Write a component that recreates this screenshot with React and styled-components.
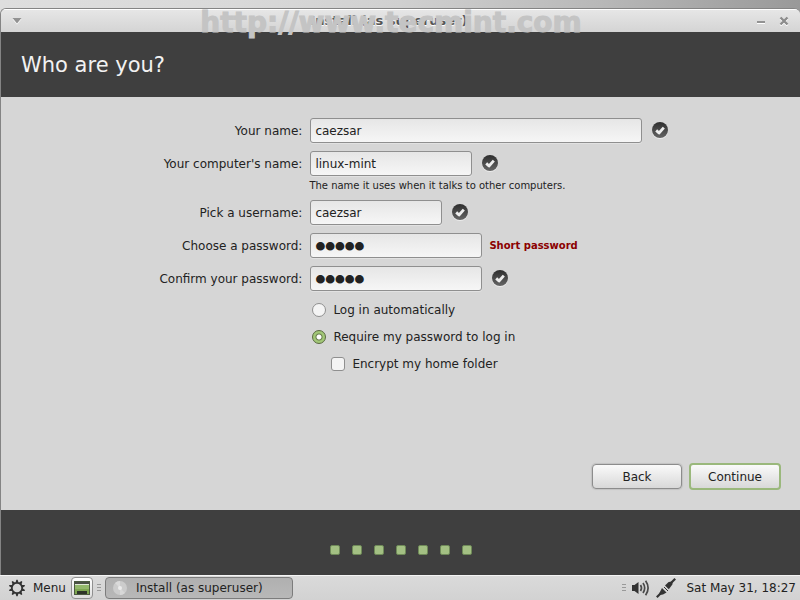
import { useState } from "react";
import styled, { createGlobalStyle } from "styled-components";

const GlobalStyle = createGlobalStyle`
  *,
  *::before,
  *::after {
    box-sizing: border-box;
  }
  body {
    margin: 0;
    font-family: "DejaVu Sans", Verdana, sans-serif;
    font-size: 12px;
    line-height: 16px;
    color: #222222;
    background-color: #d6d6d6;
  }
  button,
  input {
    font: inherit;
    color: inherit;
  }
`;

const steps = [1, 2, 3, 4, 5, 6, 7];

function CheckIcon() {
  return (
    <StyledIcon width="20" height="20" viewBox="0 0 20 20" aria-label="Valid">
      <defs>
        <linearGradient id="badge" x1="0" y1="0" x2="0" y2="1">
          <stop offset="0" stopColor="#2e2e2e" />
          <stop offset="1" stopColor="#666666" />
        </linearGradient>
      </defs>
      <circle cx="11" cy="10" r="8" fill="#ececec" />
      <circle cx="11" cy="9" r="8" fill="url(#badge)" />
      <path
        d="M7.2 9.4 L10 12 L14.8 6.6"
        fill="none"
        stroke="#eeeeee"
        strokeWidth="2.8"
        strokeLinejoin="round"
      />
    </StyledIcon>
  );
}

function GearIcon() {
  const teeth = [0, 36, 72, 108, 144, 180, 216, 252, 288, 324];
  return (
    <StyledIcon width="18" height="18" viewBox="0 0 18 18">
      <circle cx="9" cy="9" r="5.2" fill="none" stroke="#333333" strokeWidth="1.8" />
      {teeth.map((angle) => (
        <path
          key={angle}
          d="M7.4 4 L8.4 0.8 H9.6 L10.6 4 Z"
          fill="#333333"
          transform={`rotate(${angle} 9 9)`}
        />
      ))}
    </StyledIcon>
  );
}

function DesktopIcon() {
  return (
    <svg width="16" height="14" viewBox="0 0 16 14">
      <rect x="0.5" y="0.5" width="15" height="13" fill="#7da650" stroke="#4c5a40" />
      <rect x="1" y="1" width="14" height="2" fill="#4a4f45" />
      <rect x="1" y="3" width="14" height="1" fill="#dfe8d4" />
      <rect x="1" y="4" width="14" height="4" fill="#93b86a" />
      <rect x="3" y="10" width="10" height="3" fill="#2e3429" />
    </svg>
  );
}

function DiscIcon() {
  return (
    <StyledIcon width="16" height="16" viewBox="0 0 16 16">
      <circle cx="8" cy="8" r="7" fill="#cccccc" />
      <path d="M8 8 L3 3 A7 7 0 0 1 8 1 Z" fill="#dadada" />
      <path d="M8 8 L13 13 A7 7 0 0 1 8 15 Z" fill="#d8d8d8" />
      <circle cx="8" cy="8" r="2" fill="#ececec" />
    </StyledIcon>
  );
}

function VolumeIcon() {
  return (
    <StyledIcon width="20" height="18" viewBox="0 0 20 18">
      <path d="M1 6 H3.5 L7.5 3 V15 L3.5 12 H1 Z" fill="#333333" />
      <g fill="none" stroke="#4a4a4a" strokeWidth="1.7">
        <path d="M9.5 6 Q11.5 9 9.5 12" />
        <path d="M12 4 Q15.4 9 12 14" />
        <path d="M14.6 1.8 Q19.6 9 14.6 16.2" />
      </g>
    </StyledIcon>
  );
}

function PlugIcon() {
  return (
    <StyledIcon width="20" height="20" viewBox="0 0 20 20">
      <g stroke="#333333" fill="none">
        <path d="M0.8 19.2 L5 15" strokeWidth="2.2" />
        <path d="M15 5 L19.2 0.8" strokeWidth="2.2" />
        <path d="M8 9 L12 13" strokeWidth="1" />
      </g>
      <path d="M6 10 L10.5 14.5 L7 16.5 L3.6 17 L3.4 15 Z" fill="#333333" />
      <path d="M9 7.6 L12.6 4 L16.6 3.4 L16.4 6.6 L12.8 11.2 Z" fill="#333333" />
    </StyledIcon>
  );
}

function Field({ id, label, hint, error, width, type = "text", value, valid }) {
  return (
    <>
      <StyledLabel htmlFor={id}>{label}</StyledLabel>
      <StyledControl>
        <StyledInput id={id} type={type} defaultValue={value} $width={width} />
        {valid && <CheckIcon />}
        {error && <StyledError>{error}</StyledError>}
      </StyledControl>
      {hint && <StyledHint>{hint}</StyledHint>}
    </>
  );
}

export default function App() {
  const [login, setLogin] = useState("password");

  return (
    <>
      <GlobalStyle />
      <StyledDesktop>
        <StyledWatermark>http://www.tecmint.com</StyledWatermark>
        <StyledWindow>
          <StyledTitleBar>
            <StyledWindowButton aria-label="Window menu">
              <svg width="10" height="8" viewBox="0 0 10 8">
                <path d="M0.5 2 H9.5 L5 7.5 Z" fill="#ffffff" />
                <path d="M0.5 1 H9.5 L5 6.5 Z" fill="#929292" />
              </svg>
            </StyledWindowButton>
            <StyledTitle>Install (as superuser)</StyledTitle>
            <StyledWindowButtons>
              <StyledWindowButton aria-label="Minimize">
                <svg width="10" height="10" viewBox="0 0 10 10">
                  <rect x="1" y="5" width="8" height="2" fill="#929292" />
                  <rect x="1" y="7" width="8" height="1" fill="#ffffff" />
                </svg>
              </StyledWindowButton>
              <StyledWindowButton aria-label="Close">
                <svg width="10" height="10" viewBox="0 0 10 10">
                  <path d="M1.5 2.5 L8.5 9.5 M8.5 2.5 L1.5 9.5" stroke="#ffffff" strokeWidth="2.4" />
                  <path d="M1.5 1.5 L8.5 8.5 M8.5 1.5 L1.5 8.5" stroke="#8c8c8c" strokeWidth="2.4" />
                </svg>
              </StyledWindowButton>
            </StyledWindowButtons>
          </StyledTitleBar>
          <StyledHeader>
            <StyledHeading>Who are you?</StyledHeading>
          </StyledHeader>
          <StyledContent onSubmit={(event) => event.preventDefault()}>
            <StyledForm>
              <Field id="name" label="Your name:" value="caezsar" width={332} valid />
              <Field
                id="computer"
                label="Your computer's name:"
                value="linux-mint"
                width={162}
                hint="The name it uses when it talks to other computers."
                valid
              />
              <Field id="username" label="Pick a username:" value="caezsar" width={132} valid />
              <Field
                id="password"
                label="Choose a password:"
                type="password"
                value="12345"
                width={172}
                error="Short password"
              />
              <Field
                id="confirm"
                label="Confirm your password:"
                type="password"
                value="12345"
                width={172}
                valid
              />
              <StyledOptions>
                <StyledOption>
                  <StyledRadio
                    type="radio"
                    name="login"
                    checked={login === "automatic"}
                    onChange={() => setLogin("automatic")}
                  />
                  Log in automatically
                </StyledOption>
                <StyledOption>
                  <StyledRadio
                    type="radio"
                    name="login"
                    checked={login === "password"}
                    onChange={() => setLogin("password")}
                  />
                  Require my password to log in
                </StyledOption>
                <StyledOption $nested>
                  <StyledCheckbox type="checkbox" />
                  Encrypt my home folder
                </StyledOption>
              </StyledOptions>
            </StyledForm>
            <StyledActions>
              <StyledButton type="button">Back</StyledButton>
              <StyledButton type="submit" $primary>
                Continue
              </StyledButton>
            </StyledActions>
          </StyledContent>
          <StyledFooter>
            {steps.map((step) => (
              <StyledStep key={step} />
            ))}
          </StyledFooter>
        </StyledWindow>
        <StyledTaskbar>
          <StyledMenuButton>
            <GearIcon />
            Menu
          </StyledMenuButton>
          <StyledLauncher aria-label="Show desktop">
            <DesktopIcon />
          </StyledLauncher>
          <StyledGrip />
          <StyledTask>
            <DiscIcon />
            Install (as superuser)
          </StyledTask>
          <StyledTray>
            <StyledTrayGrip />
            <VolumeIcon />
            <PlugIcon />
            <StyledClock>Sat May 31, 18:27</StyledClock>
          </StyledTray>
        </StyledTaskbar>
      </StyledDesktop>
    </>
  );
}

const StyledDesktop = styled.div`
  position: relative;
  display: flex;
  flex-direction: column;
  min-height: 100vh;
  padding-top: 8px;
  background: linear-gradient(
    to right,
    #dedede 0%,
    #d9d9d9 30%,
    #d0d0d0 50%,
    #b8b8b8 75%,
    #999999 100%
  );
`;

const StyledWatermark = styled.div`
  position: absolute;
  top: 7px;
  left: 0;
  right: 18px;
  z-index: 1;
  font-size: 28px;
  font-weight: 700;
  line-height: 32px;
  text-align: center;
  color: #c4c4c4;
  -webkit-text-stroke: 1px #c4c4c4;
  pointer-events: none;
`;

const StyledWindow = styled.main`
  display: flex;
  flex-direction: column;
  flex: 1;
  border: 1px solid #848484;
  border-width: 1px 0 0 1px;
  border-radius: 6px 6px 0 0;
  background-color: #d6d6d6;
  overflow: hidden;
`;

const StyledTitleBar = styled.div`
  display: flex;
  align-items: center;
  height: 23px;
  padding: 0 11px;
  border-top: 1px solid #ffffff;
  background: linear-gradient(#e6e6e6, #d4d4d4);
`;

const StyledTitle = styled.div`
  flex: 1;
  font-size: 13px;
  font-weight: 700;
  text-align: center;
  color: #555555;
  text-shadow: 0 1px 0 #ffffff;
`;

const StyledWindowButtons = styled.div`
  display: flex;
  gap: 13px;
`;

const StyledWindowButton = styled.button`
  display: flex;
  padding: 0;
  border: none;
  background: none;
`;

const StyledHeader = styled.header`
  display: flex;
  align-items: center;
  height: 65px;
  padding: 0 20px;
  background-color: #3f3f3f;
`;

const StyledHeading = styled.h1`
  margin: 0;
  font-size: 21px;
  font-weight: 400;
  line-height: 28px;
  color: #f2f2f2;
`;

const StyledContent = styled.form`
  display: flex;
  flex: 1;
  flex-direction: column;
  justify-content: space-between;
  padding: 21px 19px 20px;
`;

const StyledForm = styled.div`
  display: grid;
  grid-template-columns: 3fr 5fr;
  align-items: center;
  gap: 8px;
`;

const StyledLabel = styled.label`
  text-align: right;
`;

const StyledControl = styled.div`
  display: flex;
  align-items: center;
`;

const StyledInput = styled.input`
  width: ${({ $width }) => $width}px;
  height: 25px;
  margin-right: 7px;
  padding: 0 5px 0 4px;
  border: 1px solid #8f8f8f;
  border-radius: 3px;
  background: linear-gradient(#e6e6e6, #f6f6f6);
  box-shadow: 0 1px 0 #e2e2e2;
  outline: none;
  ${({ type }) =>
    type === "password" &&
    `
  padding-top: 2px;
  font-family: "Liberation Serif", serif;
  font-size: 28px;
  -webkit-text-stroke: 2px #222222;
`}
  &:focus {
    border-color: #8fae6b;
  }
`;

const StyledHint = styled.div`
  grid-column: 2;
  margin: -5px 0 0 -1px;
  font-size: 10px;
  line-height: 13px;
`;

const StyledError = styled.span`
  font-size: 10px;
  font-weight: 700;
  color: #8b0000;
`;

const StyledIcon = styled.svg`
  flex: none;
`;

const StyledOptions = styled.div`
  grid-column: 2;
  display: flex;
  flex-direction: column;
  align-items: flex-start;
  gap: 11px;
  padding: 3px 2px;
`;

const StyledOption = styled.label`
  display: flex;
  align-items: center;
  gap: 7px;
  margin-left: ${({ $nested }) => ($nested ? "19px" : "0")};
`;

const StyledRadio = styled.input`
  appearance: none;
  width: 14px;
  height: 14px;
  margin: 0;
  border: 1px solid #8f8f8f;
  border-radius: 50%;
  background-color: #f4f4f4;
  &:checked {
    border-color: #59693f;
    background: radial-gradient(circle, #ffffff 0 2px, #66794c 3px, #a2c777 4px);
  }
`;

const StyledCheckbox = styled(StyledRadio)`
  border-radius: 3px;
`;

const StyledActions = styled.div`
  display: flex;
  align-items: center;
  justify-content: flex-end;
  gap: 7px;
`;

const StyledButton = styled.button`
  min-width: ${({ $primary }) => ($primary ? "92px" : "90px")};
  height: ${({ $primary }) => ($primary ? "27px" : "25px")};
  padding: 0 16px;
  border: ${({ $primary }) =>
    $primary ? "2px solid #9ab87c" : "1px solid #8c8c8c"};
  border-radius: 4px;
  background: linear-gradient(#fafafa, #d8d8d8);
  box-shadow: ${({ $primary }) => ($primary ? "none" : "0 0 1px 1px #c2c2c2")};
`;

const StyledFooter = styled.footer`
  display: flex;
  align-items: center;
  justify-content: center;
  gap: 12px;
  height: 65px;
  padding-top: 15px;
  background-color: #3f3f3f;
`;

const StyledStep = styled.span`
  width: 10px;
  height: 10px;
  border: 1px solid #6f8a58;
  border-radius: 2px;
  background-color: #a3c083;
`;

const StyledTaskbar = styled.nav`
  display: flex;
  align-items: center;
  height: 25px;
  padding: 0 4px 0 8px;
  border-top: 1px solid #f4f4f4;
  background: linear-gradient(#dadada, #d2d2d2);
`;

const StyledMenuButton = styled.button`
  display: flex;
  align-items: center;
  gap: 7px;
  margin-right: 5px;
  padding: 0;
  border: none;
  background: none;
`;

const StyledLauncher = styled.button`
  display: flex;
  align-items: center;
  justify-content: center;
  width: 22px;
  height: 22px;
  padding: 0;
  border: 1px solid #909090;
  border-radius: 4px;
  background: linear-gradient(#ffffff, #dddddd);
`;

const StyledGrip = styled.span`
  width: 4px;
  height: 8px;
  margin: 0 4px;
  background: repeating-linear-gradient(#999999 0 1px, transparent 1px 3px);
`;

const StyledTrayGrip = styled(StyledGrip)`
  margin: 0;
`;

const StyledTask = styled.button`
  display: flex;
  align-items: center;
  gap: 8px;
  width: 188px;
  height: 22px;
  padding: 0 6px;
  border: 1px solid #7c7c7c;
  border-radius: 4px;
  background: linear-gradient(#b0b0b0, #b8b8b8);
`;

const StyledTray = styled.div`
  display: flex;
  align-items: center;
  gap: 5px;
  margin-left: auto;
`;

const StyledClock = styled.time`
  margin-left: 5px;
`;
